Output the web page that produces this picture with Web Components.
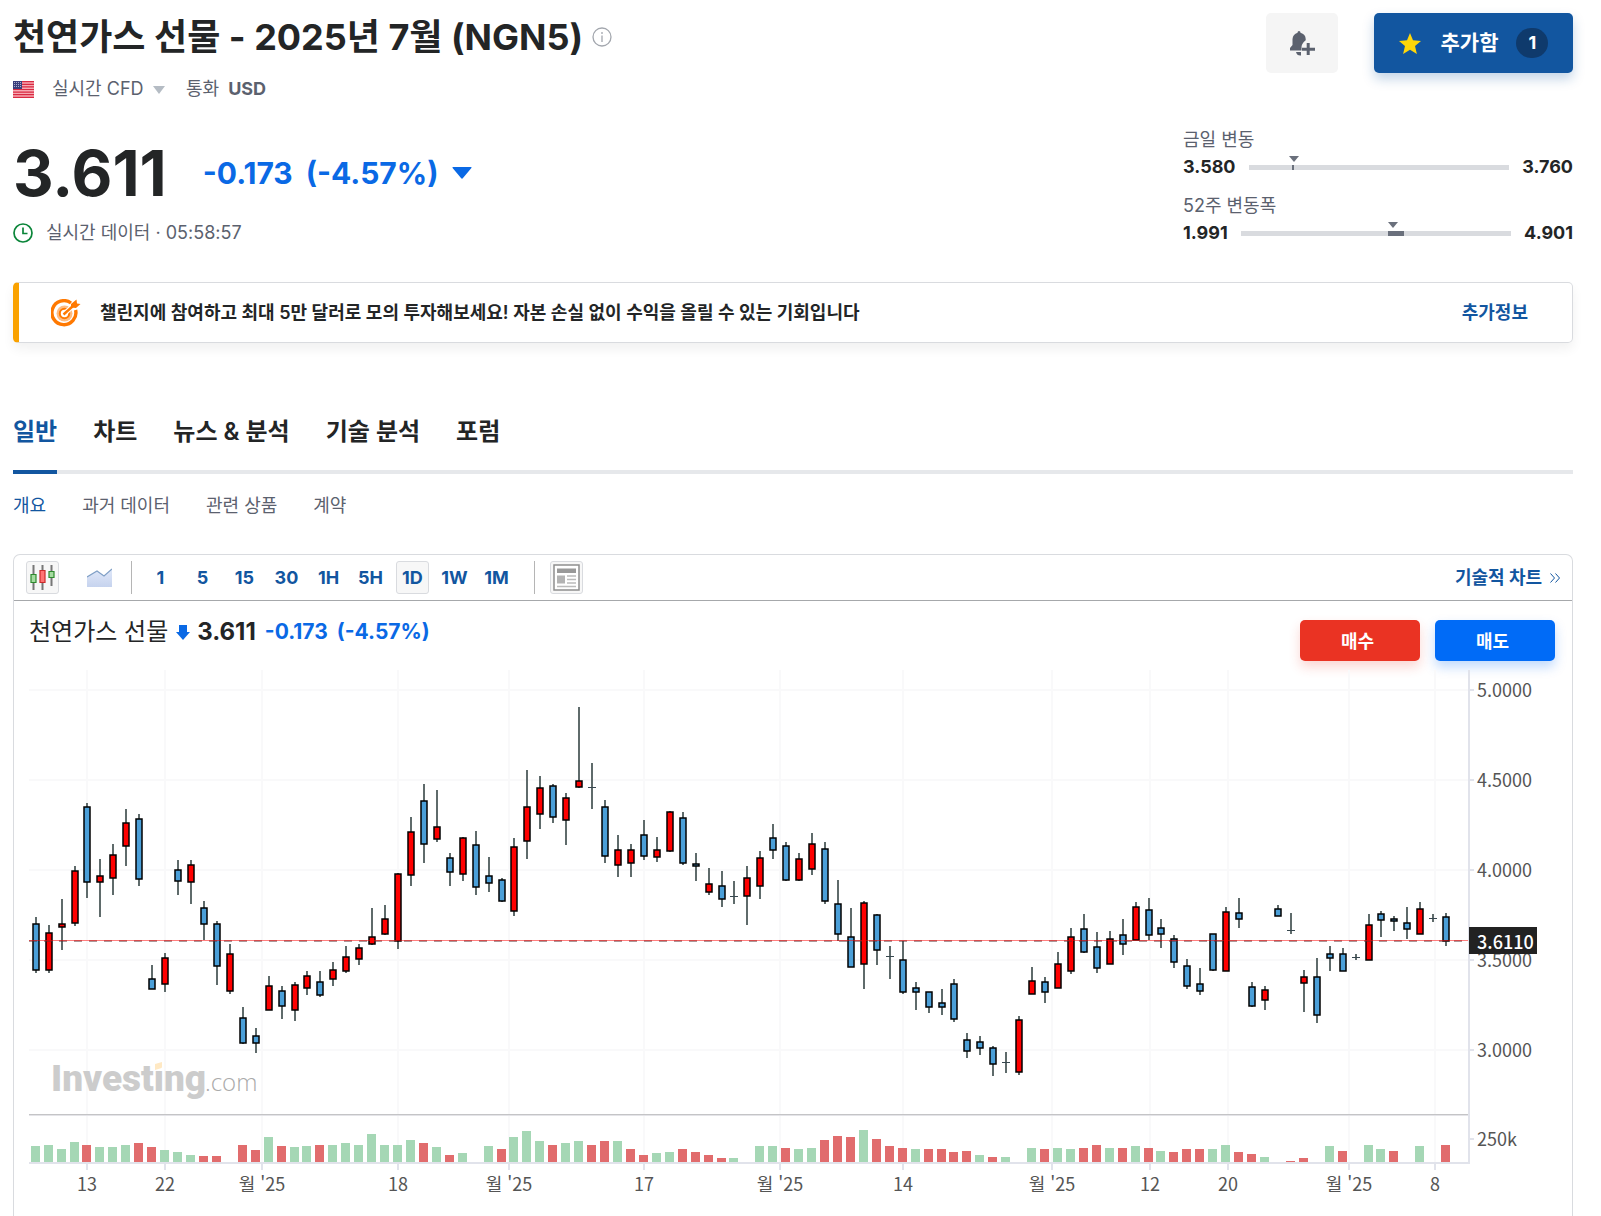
<!DOCTYPE html>
<html lang="ko">
<head>
<meta charset="utf-8">
<meta name="viewport" content="width=device-width, initial-scale=1">
<title>천연가스 선물 - 2025년 7월 (NGN5)</title>
<style>
    body {
        margin: 0;
        padding: 13px 28px 0 13px;
        background: #fff;
        color: #232526;
        font-family: Inter, "Noto Sans CJK KR", sans-serif;
        font-size: 18px;
        line-height: 24px;
        --blue: #1256a0;
        --down: #0a69e5;
        --muted: #5b616e;
        --line: #d9dbdf;
    }
</style>
</head>
<body>
<quote-header></quote-header>
<promo-banner href="#challenge">챌린지에 참여하고 최대 5만 달러로 모의 투자해보세요! 자본 손실 없이 수익을 올릴 수 있는 기회입니다</promo-banner>
<main-tabs></main-tabs>
<sub-tabs></sub-tabs>
<chart-panel>
    <candle-chart></candle-chart>
</chart-panel>

<script>
class QuoteHeader extends HTMLElement {
    constructor() {
        super();
        this.attachShadow({ mode: 'open' });
    }

    connectedCallback() {
        this.shadowRoot.innerHTML = `
            <style>
                :host { display: flex; justify-content: space-between; }
                .left, .right { display: flex; flex-direction: column; }
                .right { width: 390px; }
                h1 { margin: 0; font-size: 36px; line-height: 48px; font-weight: 700; display: flex; align-items: center; gap: 9px; }
                .meta { display: flex; align-items: center; margin-top: 16px; color: var(--muted); }
                .meta svg { flex: none; }
                .flag { margin-right: 18px; }
                select { appearance: none; border: 0; padding: 0; margin: 0; background: none; font: inherit; color: inherit; }
                .caret { margin: 2px 21px 0 9px; }
                .meta b { font-weight: 700; margin-left: 9px; }
                .price { display: flex; align-items: center; margin-top: 40px; height: 64px; }
                .last { font-size: 63px; line-height: 64px; font-weight: 700; }
                .change { font-size: 30px; line-height: 40px; font-weight: 700; color: var(--down); margin-left: 36px; display: flex; align-items: center; gap: 13px; }
                .time { display: flex; align-items: center; gap: 13px; margin-top: 16px; color: var(--muted); }
                .actions { display: flex; justify-content: flex-end; gap: 36px; margin-bottom: 55px; }
                button { border: 0; border-radius: 5px; height: 60px; font: inherit; display: flex; align-items: center; justify-content: center; padding: 0; }
                .alert { width: 72px; background: #f5f5f5; }
                .watch { width: 199px; background: var(--blue); color: #fff; font-size: 21px; font-weight: 700; box-shadow: 0 6px 12px rgba(18, 86, 160, .25); }
                .watch svg { margin-right: 20px; }
                .count { width: 32px; height: 30px; line-height: 30px; border-radius: 16px; background: #0f3a6c; font-size: 18px; margin-left: 18px; }
            </style>
            <div class="left">
                <h1>천연가스 선물 - 2025년 7월 (NGN5)
                    <svg width="20" height="20" viewBox="0 0 20 20" fill="none" stroke="#a3a7ae" stroke-width="1.3">
                        <circle cx="10" cy="10" r="9"/><path d="M10 8.5v6.5M10 5v2"/>
                    </svg>
                </h1>
                <div class="meta">
                    <svg class="flag" width="21" height="17" viewBox="0 0 21 17">
                        <rect width="21" height="17" fill="#f6a9b2"/>
                        <path d="M0 .7h21M0 3.3h21M0 5.9h21M0 8.5h21M0 11.1h21M0 13.7h21M0 16.3h21" stroke="#d92a42" stroke-width="1.2"/>
                        <rect width="9" height="8" fill="#3a3f7d"/>
                        <path d="M1 1.5h8M1 3.5h8M1 5.5h8" stroke="#c5c7dd" stroke-width=".8" stroke-dasharray="1 1"/>
                    </svg>
                    <select aria-label="시장"><option>실시간 CFD</option></select>
                    <svg class="caret" width="12" height="8" viewBox="0 0 12 8"><path d="M0 0h12L6 8z" fill="#b5bcc4"/></svg>
                    <span>통화</span><b>USD</b>
                </div>
                <div class="price">
                    <span class="last">3.611</span>
                    <span class="change"><span>-0.173</span><span>(-4.57%)</span>
                        <svg width="20" height="12" viewBox="0 0 20 12"><path d="M1 0h18q1 0 .4 1L11 11q-1 1.3-2 0L.6 1Q0 0 1 0z" fill="#0a69e5"/></svg>
                    </span>
                </div>
                <div class="time">
                    <svg width="20" height="20" viewBox="0 0 20 20" fill="none" stroke="#0a8539" stroke-width="1.7">
                        <circle cx="10" cy="10" r="9"/><path d="M10 4.500v6h4.500"/>
                    </svg>
                    <span>실시간 데이터 · 05:58:57</span>
                </div>
            </div>
            <div class="right">
                <div class="actions">
                    <button class="alert" aria-label="알림 추가">
                        <svg width="25" height="25" viewBox="0 0 25 25" fill="#5b616e">
                            <path d="M9 0q1.500 0 1.500 1.700 5 1.300 5.200 6.300v1.300c-3 2-4.500 5-4.200 8.200v2H0V17l2.500-3V8Q3 3 7.500 1.700 7.500 0 9 0zM6 21h5v3.500Q7 25 6 21z"/>
                            <path d="M16.700 12h3v4.700H25v3h-5.300V24h-3v-4.300H12v-3h4.700z"/>
                        </svg>
                    </button>
                    <button class="watch">
                        <svg width="22" height="21" viewBox="0 0 22 21"><path d="M11 0l3 7.200 8 .7-6 5.200 1.900 7.900L11 16.800 4.100 21 6 13.100 0 7.900l8-.7z" fill="#ffd70a"/></svg>
                        추가함<span class="count">1</span>
                    </button>
                </div>
                <range-bar low="3.580" high="3.760" marker="17" start="16.5" size="1">금일 변동</range-bar>
                <range-bar low="1.991" high="4.901" marker="56" start="54.5" size="6">52주 변동폭</range-bar>
            </div>
        `;
    }
}

class RangeBar extends HTMLElement {
    constructor() {
        super();
        this.attachShadow({ mode: 'open' });
    }

    connectedCallback() {
        const at = name => this.getAttribute(name);
        this.shadowRoot.innerHTML = `
            <style>
                :host { display: block; color: var(--muted); margin-bottom: 15px; }
                .row { display: flex; align-items: center; gap: 13px; margin-top: 3px; color: #232526; font-weight: 700; }
                .bar { flex: 1; height: 5px; background: var(--line); position: relative; }
                .fill { position: absolute; top: 0; height: 5px; background: #6a707c; }
                .mark { position: absolute; top: -9px; margin-left: -4px; border: 5px solid transparent; border-top: 6px solid #6a707c; border-bottom: 0; }
            </style>
            <slot></slot>
            <div class="row">
                <span>${at('low')}</span>
                <div class="bar">
                    <div class="fill" style="left: ${at('start')}%; width: ${at('size')}%"></div>
                    <div class="mark" style="left: ${at('marker')}%"></div>
                </div>
                <span>${at('high')}</span>
            </div>
        `;
    }
}

class PromoBanner extends HTMLElement {
    constructor() {
        super();
        this.attachShadow({ mode: 'open' });
    }

    connectedCallback() {
        this.shadowRoot.innerHTML = `
            <style>
                :host {
                    display: flex;
                    align-items: center;
                    height: 61px;
                    margin-top: 22px;
                    padding: 0 44px 0 32px;
                    border: 1px solid var(--line);
                    border-left: 6px solid #faa200;
                    border-radius: 5px;
                    box-shadow: 0 6px 12px rgba(0, 0, 0, .06);
                    font-weight: 600;
                    box-sizing: border-box;
                }
                svg { flex: none; margin-right: 19px; }
                a { margin-left: auto; color: var(--blue); font-weight: 700; text-decoration: none; }
            </style>
            <svg width="30" height="28" viewBox="0 0 30 28" fill="none">
                <path d="M20 4A12 12 0 1 0 24.600 11" stroke="#ff7901" stroke-width="3.4"/>
                <circle cx="13.5" cy="14.5" r="8" fill="#ffbc82"/>
                <circle cx="13.5" cy="14.5" r="4.700" fill="#fff" stroke="#ff7901" stroke-width="2"/>
                <path d="M12.500 15.500L22 7" stroke="#fff" stroke-width="5"/>
                <path d="M12.500 15.500L22 7" stroke="#ff7901" stroke-width="2.4"/>
                <path d="M20 8.500V5l5.500-4.500.5 4 3.500.5L25 9z" fill="#ff7901"/>
            </svg>
            <span><slot></slot></span>
            <a href="${this.getAttribute('href')}">추가정보</a>
        `;
    }
}

class MainTabs extends HTMLElement {
    constructor() {
        super();
        this.attachShadow({ mode: 'open' });
    }

    connectedCallback() {
        this.shadowRoot.innerHTML = `
            <style>
                :host { display: block; margin-top: 67px; }
                nav { display: flex; gap: 36px; font-size: 24px; line-height: 44px; font-weight: 600; box-shadow: inset 0 -4px #e6e8eb; }
                a { color: inherit; text-decoration: none; padding-bottom: 16px; border-bottom: 4px solid transparent; }
                a.on { color: var(--blue); border-color: var(--blue); }
            </style>
            <nav>
                <a class="on" href="#overview">일반</a>
                <a href="#chart">차트</a>
                <a href="#news">뉴스 &amp; 분석</a>
                <a href="#technical">기술 분석</a>
                <a href="#forum">포럼</a>
            </nav>
        `;
    }
}

class SubTabs extends HTMLElement {
    constructor() {
        super();
        this.attachShadow({ mode: 'open' });
    }

    connectedCallback() {
        this.shadowRoot.innerHTML = `
            <style>
                :host { display: block; margin: 20px 0 36px; }
                nav { display: flex; gap: 36px; }
                a { color: var(--muted); text-decoration: none; }
                a.on { color: var(--blue); }
            </style>
            <nav>
                <a class="on" href="#summary">개요</a>
                <a href="#history">과거 데이터</a>
                <a href="#related">관련 상품</a>
                <a href="#contracts">계약</a>
            </nav>
        `;
    }
}

class ChartPanel extends HTMLElement {
    constructor() {
        super();
        this.attachShadow({ mode: 'open' });
    }

    connectedCallback() {
        const ranges = ['1', '5', '15', '30', '1H', '5H', '1D', '1W', '1M'];
        this.shadowRoot.innerHTML = `
            <style>
                :host { display: block; border: 1px solid var(--line); border-bottom: 0; border-radius: 7px 7px 0 0; }
                .bar { display: flex; align-items: center; height: 45px; padding: 0 12px; border-bottom: 1px solid #a6a8ab; }
                button { font: inherit; padding: 0; }
                .tool { width: 33px; height: 33px; box-sizing: border-box; border: 1px solid transparent; border-radius: 3px; background: none; color: var(--blue); font-weight: 700; display: flex; align-items: center; justify-content: center; }
                .on { border-color: var(--line); background: #f7f7f7; }
                .area { margin: 0 15px 0 24px; }
                .sep { width: 1px; height: 33px; background: #b5b5b5; }
                .ranges { display: flex; gap: 9px; margin: 0 21px 0 12px; }
                .news { margin-left: 15px; }
                a { margin-left: auto; color: var(--blue); text-decoration: none; font-weight: 700; display: flex; align-items: center; gap: 8px; }
                .head { display: flex; justify-content: space-between; align-items: flex-start; height: 50px; padding: 19px 17px 0 15px; }
                .quote { display: flex; align-items: center; font-size: 21px; }
                .quote h2 { margin: 0; font-size: 24px; font-weight: 400; }
                .quote svg { margin: 1px 7px 0 8px; }
                .quote b { font-size: 24px; font-weight: 700; }
                .quote span { color: var(--down); font-weight: 700; margin-left: 9px; }
                .trade { display: flex; gap: 15px; }
                .trade button { width: 120px; height: 41px; padding: 3px 5px 0 0; border: 0; border-radius: 5px; color: #fff; font-weight: 700; }
                .buy { background: #ea3323; box-shadow: 0 6px 12px rgba(234, 51, 35, .2); }
                .sell { background: #006bf7; box-shadow: 0 6px 12px rgba(0, 107, 247, .25); }
            </style>
            <div class="bar">
                <button class="tool on" aria-label="캔들 차트">
                    <svg width="25" height="26" viewBox="0 0 25 26">
                        <path d="M3.500 0v25M12.500 0v25M21.500 0v21" stroke="#777" stroke-width="2"/>
                        <path d="M1 9.500h5v8H1zM19 6.500h5v6h-5z" fill="#a5dba0" stroke="#2d8a2d" stroke-width="1.2"/>
                        <path d="M10 5.500h5v12h-5z" fill="#ff7474" stroke="#cc2b2b" stroke-width="1.2"/>
                    </svg>
                </button>
                <button class="tool area" aria-label="영역 차트">
                    <svg width="25" height="19" viewBox="0 0 25 19">
                        <defs><linearGradient id="g" x2="0" y2="1"><stop stop-color="#e0e8f9"/><stop offset="1" stop-color="#c6d3ee"/></linearGradient></defs>
                        <path d="M0 9l10-6 7 5 8-7v18H0z" fill="url(#g)"/>
                        <path d="M0 9l10-6 7 5 8-7" fill="none" stroke="#7f9fc6" stroke-width="1.2"/>
                    </svg>
                </button>
                <div class="sep"></div>
                <div class="ranges">
                    ${ranges.map(r => `<button class="tool${r === '1D' ? ' on' : ''}">${r}</button>`).join('')}
                </div>
                <div class="sep"></div>
                <button class="tool on news" aria-label="뉴스">
                    <svg width="27" height="27" viewBox="0 0 27 27">
                        <path d="M1 1h25v25H1z" fill="#fff" stroke="#8f8f8f" stroke-width="1.5"/>
                        <path d="M4 4.500h19v4.500H4z" fill="#999"/>
                        <path d="M4 11.500h8v8H4z" fill="#b3b3b3"/>
                        <path d="M14 12h9M14 15.500h9M14 19h9M4 22.500h19" stroke="#bbb" stroke-width="1.3"/>
                    </svg>
                </button>
                <a href="#technical-chart">기술적 차트
                    <svg width="10" height="10" viewBox="0 0 10 10" fill="none" stroke="#1256a0"><path d="M.5.5L4.500 5l-4 4.500M5.500.5l4 4.500-4 4.500"/></svg>
                </a>
            </div>
            <div class="head">
                <div class="quote">
                    <h2>천연가스 선물</h2>
                    <svg width="14" height="15" viewBox="0 0 14 15"><path d="M3 0h8v7h3l-7 8-7-8h3z" fill="#0a69e5"/></svg>
                    <b>3.611</b><span>-0.173</span><span>(-4.57%)</span>
                </div>
                <div class="trade">
                    <button class="buy">매수</button>
                    <button class="sell">매도</button>
                </div>
            </div>
            <slot></slot>
        `;
    }
}

// u = up (red), d = down (blue), x = flat; then high, body top, body bottom, low
const CANDLES = `
d 917 924 970 973|u 925 933 970 973|u 899 924 927 950|u 866 871 923 926|d 803 807 882 898
u 859 876 882 917|u 844 855 878 895|u 809 823 846 866|d 814 819 879 886|d 965 979 989 989
u 953 958 984 992|d 860 870 881 895|u 860 865 882 904|d 901 908 924 940|d 921 924 966 985
u 944 954 991 994|d 1007 1018 1043 1044|d 1028 1036 1043 1053|u 976 986 1010 1010|d 986 991 1006 1019
u 982 985 1010 1021|u 971 976 988 995|d 971 982 995 997|u 962 970 979 986|u 946 957 971 973
u 944 948 959 965|u 908 937 944 945|u 905 919 934 935|u 873 874 941 949|u 817 832 875 886
d 784 801 844 863|u 790 827 839 842|d 853 858 872 886|u 837 838 874 881|d 831 845 887 895
d 857 876 883 892|d 878 880 901 902|u 838 847 911 916|u 770 807 841 859|u 776 788 814 829
d 784 786 817 823|u 793 798 820 845|u 707 781 787 788|x 763 787 787 809|d 800 807 856 863
u 835 850 865 877|u 844 850 863 877|d 820 835 856 860|u 837 850 857 862|u 811 812 851 852
d 812 818 863 865|d 853 864 866 881|u 868 884 892 895|d 871 886 899 907|x 881 896 896 904
u 866 878 896 925|u 851 858 886 899|d 824 838 850 859|d 842 846 880 881|u 853 859 880 881
u 833 844 869 875|d 842 849 901 904|d 880 904 934 941|d 908 937 967 967|u 901 903 964 989
d 914 915 950 965|x 946 956 956 979|d 941 960 992 994|d 982 988 992 1010|d 992 992 1007 1013
d 989 1003 1007 1015|d 979 984 1019 1022|d 1033 1040 1051 1058|d 1036 1042 1048 1055|d 1046 1048 1064 1076
x 1052 1062 1062 1073|u 1016 1020 1072 1075|u 967 981 994 994|d 977 982 992 1003|u 952 964 988 988
u 928 937 971 974|d 914 929 952 953|d 932 947 968 973|u 931 939 964 964|d 919 935 944 955
u 902 907 940 940|d 898 910 935 940|d 919 928 934 948|d 935 939 962 968|d 959 966 986 989
d 968 984 991 995|d 934 934 970 971|u 907 912 971 971|d 898 913 919 928|d 982 987 1006 1007
u 986 990 1000 1010|d 905 909 916 916|x 913 930 930 934|u 970 977 983 1012|d 958 977 1015 1023
d 946 954 958 971|d 948 954 971 971|x 954 957 957 960|u 914 925 960 960|d 911 914 920 937
d 916 919 921 931|d 907 923 929 939|u 902 909 934 934|x 914 918 918 922|d 913 917 941 946
`.trim().split(/[|\n]/).map(row => row.split(' '));

// bar height per session, negative = red, 0 = no volume
const VOLUMES = [
    16, 17, 13, 20, -17, 15, 15, 17, -19, -15, 12, 10, 7, -6, -6, 0, -17, -12, 25, -16, 15, 16,
    -17, 17, 19, 17, 28, 17, 17, 22, -19, 15, -7, 9, 0, 16, -13, 25, 31, 21, -17, 19, 21, -17,
    -21, 21, -13, -7, 9, 10, -13, -10, -7, -4, 4, 0, 16, 16, -14, 13, 14, -22, -26, -25, 32, -23,
    -16, -14, 13, -13, -13, -10, -11, 7, -5, 5, 0, 14, -13, 14, 13, -14, -17, 14, -14, 16, -14, 11,
    -10, -13, -13, 13, 17, -10, -8, 5, 0, -1, -4, 0, 16, -11, 0, 17, 13, -11, 0, 16, 0, -17
];

const DATES = [
    [87, '13'], [165, '22'], [262, "월 '25"], [398, '18'], [509, "월 '25"], [644, '17'], [780, "월 '25"],
    [903, '14'], [1052, "월 '25"], [1150, '12'], [1228, '20'], [1349, "월 '25"], [1435, '8']
];

const PRICES = [[690, '5.0000'], [780, '4.5000'], [870, '4.0000'], [960, '3.5000'], [1050, '3.0000']];

class CandleChart extends HTMLElement {
    constructor() {
        super();
        this.attachShadow({ mode: 'open' });
    }

    x(i) {
        return Math.round(35.7 + i * 12.94);
    }

    candle([kind, high, top, bottom, low], i) {
        const x = this.x(i);
        const wick = `<path class="wick" d="M${x} ${high}V${low}"/>`;
        if (kind === 'x') {
            return wick + `<path class="flat" d="M${x - 4} ${top}.5h8"/>`;
        }
        return wick + `<rect class="${kind}" x="${x - 3}" y="${top}" width="6" height="${bottom - top}"/>`;
    }

    volume(v, i) {
        const h = Math.abs(v);
        return v ? `<rect fill="${v < 0 ? '#e16c6d' : '#a5d7b5'}" x="${this.x(i) - 5}" y="${1162 - h}" width="9" height="${h}"/>` : '';
    }

    connectedCallback() {
        this.shadowRoot.innerHTML = `
            <style>
                :host { display: block; }
                svg { display: block; width: 100%; height: auto; }
                text { font: 18px "Noto Sans CJK KR", sans-serif; fill: #555; }
                .grid { stroke: #f9f9fa; stroke-width: 2; }
                .axis { stroke: #e1e3eb; stroke-width: 2; }
                .wick { stroke: #5f6b6b; stroke-width: 2; }
                .flat { stroke: #37474f; }
                .u, .d { stroke: #000; stroke-width: 1.5; }
                .u { fill: #f00; }
                .d { fill: #4b9fd8; }
                .logo { font: 900 37px Roboto, sans-serif; fill: #ccc; }
                .com { font: 300 24px "Open Sans", sans-serif; fill: #aaa; }
            </style>
            <svg viewBox="14 670 1558 546" role="img" aria-label="천연가스 선물 일간 캔들 차트">
                ${PRICES.map(([y]) => `<path class="grid" d="M29 ${y}H1468"/>`).join('')}
                ${DATES.map(([x]) => `<path class="grid" d="M${x} 670V1162"/>`).join('')}
                <text class="logo" x="51" y="1091">Investing</text>
                <path d="M153 1061h10v8h-10z" fill="#fff"/>
                <path d="M155 1064l7-2v5q0 1-2 1.500l-5 1.500z" fill="#ffe9c4"/>
                <text class="com" x="205" y="1091">.com</text>
                <path d="M29 1114.500H1468" stroke="#c4c4c6"/>
                <path d="M29 1115.500H1468" stroke="#e4e4e8"/>
                ${VOLUMES.map((v, i) => this.volume(v, i)).join('')}
                ${CANDLES.map((c, i) => this.candle(c, i)).join('')}
                <path d="M29 941H1469" stroke="#5a3034" stroke-dasharray="8 7"/>
                <path d="M29 940.500H1469" stroke="#f00" opacity=".5"/>
                <path class="axis" d="M1469 670V1163M29 1163H1470M1469 1139h5"/>
                ${DATES.map(([x]) => `<path class="axis" d="M${x} 1163v7"/>`).join('')}
                ${DATES.map(([x, t]) => `<text x="${x}" y="1191" text-anchor="middle">${t}</text>`).join('')}
                ${PRICES.map(([y, t]) => `<path class="axis" d="M1469 ${y}h5"/><text x="1477" y="${y + 7}">${t}</text>`).join('')}
                <text x="1477" y="1146">250k</text>
                <path d="M1469 927h68v27h-68z" fill="#222"/>
                <text x="1477" y="949" style="fill: #fff; font-weight: 500">3.6110</text>
            </svg>
        `;
    }
}

customElements.define('range-bar', RangeBar);
customElements.define('quote-header', QuoteHeader);
customElements.define('promo-banner', PromoBanner);
customElements.define('main-tabs', MainTabs);
customElements.define('sub-tabs', SubTabs);
customElements.define('candle-chart', CandleChart);
customElements.define('chart-panel', ChartPanel);
</script>
</body>
</html>
